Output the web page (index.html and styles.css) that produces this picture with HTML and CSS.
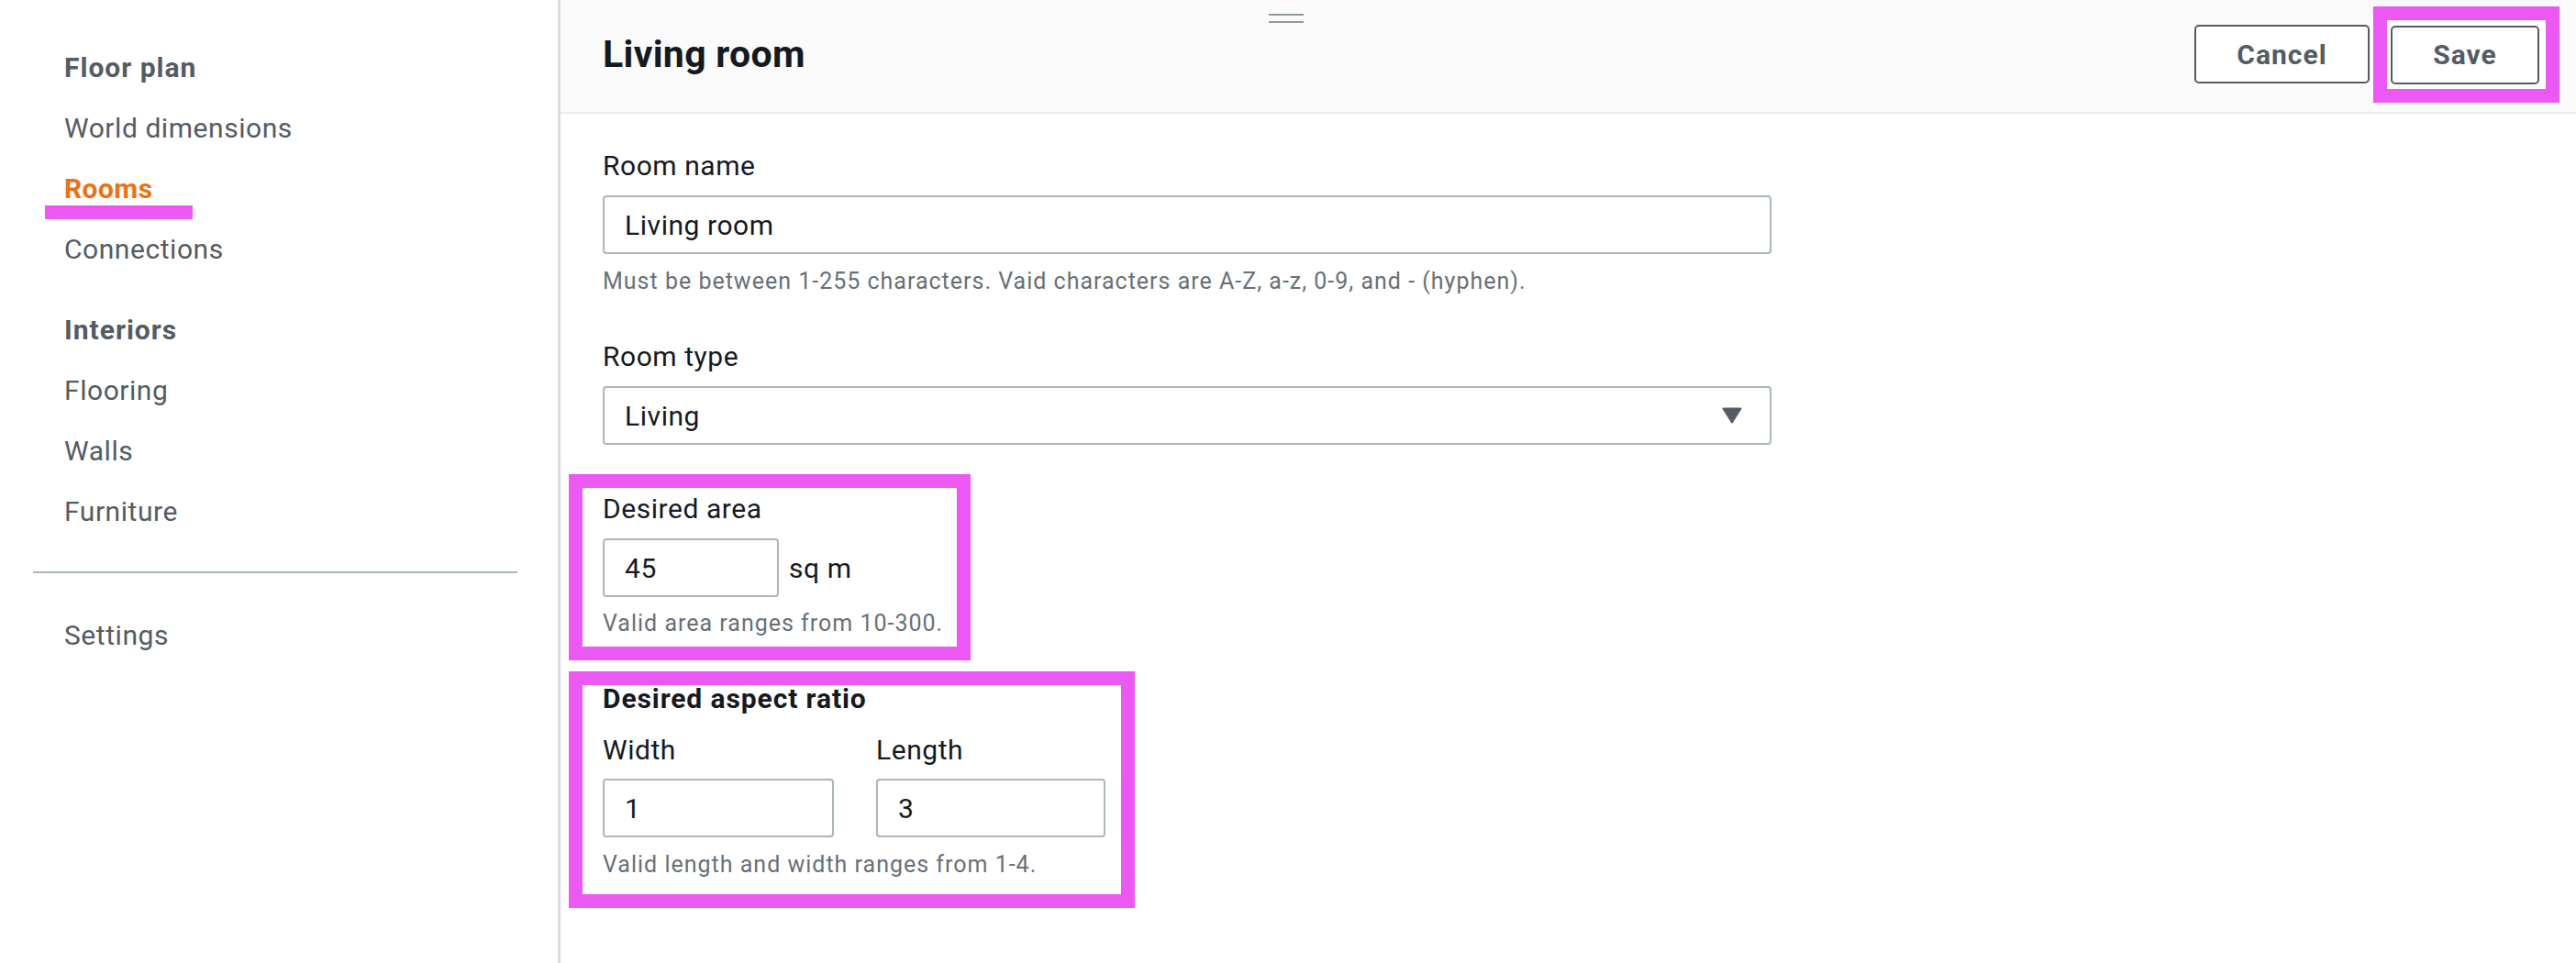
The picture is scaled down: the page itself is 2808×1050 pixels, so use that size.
FILE: index.html
```html
<!DOCTYPE html>
<html lang="en">
<head>
<meta charset="utf-8">
<title>Living room</title>
<link rel="stylesheet" href="styles.css">
</head>
<body>
  <div class="drag-handle"></div>
  <nav class="sidebar">
    <div class="nav-group">
      <div class="nav-heading">Floor plan</div>
      <a class="nav-link">World dimensions</a>
      <a class="nav-link active">Rooms</a>
      <a class="nav-link">Connections</a>
    </div>
    <div class="nav-group nav-group-second">
      <div class="nav-heading">Interiors</div>
      <a class="nav-link">Flooring</a>
      <a class="nav-link">Walls</a>
      <a class="nav-link">Furniture</a>
    </div>
    <hr class="nav-divider">
    <a class="nav-link">Settings</a>
  </nav>
  <main class="panel">
    <header class="panel-header">
      <h1 class="panel-title">Living room</h1>
      <div class="actions">
        <button class="btn btn-cancel" type="button">Cancel</button>
        <span class="highlight highlight-save"><button class="btn btn-save" type="button">Save</button></span>
      </div>
    </header>
    <form class="form">
      <div class="field">
        <label class="field-label">Room name</label>
        <input class="input input-wide" type="text" value="Living room">
        <div class="helper">Must be between 1-255 characters. Vaid characters are A-Z, a-z, 0-9, and - (hyphen).</div>
      </div>
      <div class="field field-spaced">
        <label class="field-label">Room type</label>
        <div class="select input-wide">
          <span>Living</span>
          <svg class="caret" width="22" height="18" viewBox="0 0 22 18"><path d="M1.5 1.5 H20.5 L11 16.5 Z" fill="#545b64" stroke="#545b64" stroke-width="2" stroke-linejoin="round"/></svg>
        </div>
      </div>
      <div class="field highlight highlight-area">
        <label class="field-label">Desired area</label>
        <div class="unit-row">
          <input class="input input-area" type="text" value="45">
          <span class="unit">sq m</span>
        </div>
        <div class="helper helper-area">Valid area ranges from 10-300.</div>
      </div>
      <div class="field highlight highlight-ratio">
        <div class="group-title">Desired aspect ratio</div>
        <div class="ratio-grid">
          <div class="ratio-col">
            <label class="field-label">Width</label>
            <input class="input input-ratio" type="text" value="1">
          </div>
          <div class="ratio-col">
            <label class="field-label">Length</label>
            <input class="input input-ratio" type="text" value="3">
          </div>
        </div>
        <div class="helper">Valid length and width ranges from 1-4.</div>
      </div>
    </form>
  </main>
</body>
</html>
```
FILE: styles.css
```css
html, body {
  margin: 0;
  height: 1050px;
  overflow: hidden;
}

body {
  position: relative;
  display: flex;
  background: #ffffff;
  font-family: Roboto, "Liberation Sans", Arial, sans-serif;
  letter-spacing: 0.55px;
  color: #16191f;
}

.drag-handle {
  position: absolute;
  top: 15px;
  left: 50%;
  margin-left: -21px;
  width: 38px;
  height: 6px;
  border-top: 2px solid #8f9a9b;
  border-bottom: 2px solid #8f9a9b;
}

/* Sidebar */
.sidebar {
  flex: none;
  width: 608px;
  padding-top: 41px;
  border-right: 3px solid #d5dbdb;
}

.nav-heading,
.nav-link {
  display: block;
  position: relative;
  padding-left: 70px;
  font-size: 30px;
  line-height: 66px;
  color: #545b64;
}

.nav-heading {
  font-weight: 700;
  letter-spacing: 1px;
}

.nav-link.active {
  color: #ec7211;
  font-weight: 700;
  letter-spacing: 0.4px;
}

.nav-link.active::after {
  content: "";
  position: absolute;
  left: 49px;
  top: 51px;
  width: 161px;
  height: 15px;
  background: #ec58f4;
}

.nav-group-second {
  margin-top: 22px;
}

.nav-divider {
  width: 528px;
  height: 2px;
  margin: 32px 0 35px 36px;
  border: 0;
  background: #aab7b8;
}

/* Panel */
.panel {
  flex: 1;
  display: flex;
  flex-direction: column;
  min-width: 0;
}

.panel-header {
  height: 124px;
  box-sizing: border-box;
  display: flex;
  align-items: center;
  justify-content: space-between;
  padding: 0 18px 4px 46px;
  background: #fafafa;
  border-bottom: 2px solid #eaeded;
}

.panel-title {
  margin: 0;
  font-size: 41px;
  line-height: 1;
  font-weight: 700;
  letter-spacing: 0.3px;
  color: #16191f;
}

.actions {
  display: flex;
  align-items: center;
}

.btn {
  height: 64px;
  box-sizing: border-box;
  padding: 0;
  border: 2px solid #545b64;
  border-radius: 5px;
  background: #ffffff;
  font-family: Roboto, "Liberation Sans", Arial, sans-serif;
  font-size: 30px;
  font-weight: 700;
  letter-spacing: 1px;
  color: #545b64;
}

.btn-cancel {
  width: 191px;
}

.btn-save {
  width: 162px;
}

.highlight {
  box-sizing: border-box;
  border: 15px solid #ec58f4;
  background: #ffffff;
}

.highlight-save {
  display: flex;
  margin-left: 4px;
  padding: 6px 7px 5px 4px;
}

/* Form */
.form {
  padding: 37px 0 0 46px;
}

.field-label {
  display: block;
  margin-bottom: 12px;
  font-size: 30px;
  line-height: 40px;
  color: #16191f;
}

.input {
  display: block;
  box-sizing: border-box;
  height: 64px;
  margin: 0;
  padding: 0 22px;
  border: 2px solid #aab7b8;
  border-radius: 4px;
  background: #ffffff;
  font-family: Roboto, "Liberation Sans", Arial, sans-serif;
  font-size: 30px;
  letter-spacing: 0.55px;
  color: #16191f;
  outline: none;
}

.input-wide {
  width: 1274px;
}

.select {
  display: flex;
  align-items: center;
  justify-content: space-between;
  box-sizing: border-box;
  height: 64px;
  padding: 0 30px 0 22px;
  border: 2px solid #aab7b8;
  border-radius: 4px;
  font-size: 30px;
  color: #16191f;
}

.caret {
  display: block;
}

.helper {
  margin-top: 14px;
  font-size: 25px;
  line-height: 32px;
  letter-spacing: 1px;
  color: #687078;
}

.field-spaced {
  margin-top: 46px;
}

.highlight-area {
  width: 438px;
  margin: 32px 0 0 -37px;
  padding: 3px 0 9px 22px;
}

.unit-row {
  display: flex;
  align-items: center;
  gap: 11px;
}

.input-area {
  width: 192px;
}

.unit {
  font-size: 30px;
  color: #16191f;
}

.helper-area {
  margin-top: 13px;
}

.highlight-ratio {
  width: 617px;
  margin: 12px 0 0 -37px;
  padding: 0 0 16px 22px;
}

.group-title {
  font-size: 30px;
  line-height: 30px;
  font-weight: 700;
  letter-spacing: 0.9px;
  color: #16191f;
}

.ratio-grid {
  display: grid;
  grid-template-columns: 252px 250px;
  column-gap: 46px;
  margin-top: 21px;
}

.ratio-col .field-label {
  margin-bottom: 11px;
}

.input-ratio {
  width: 100%;
}
```
